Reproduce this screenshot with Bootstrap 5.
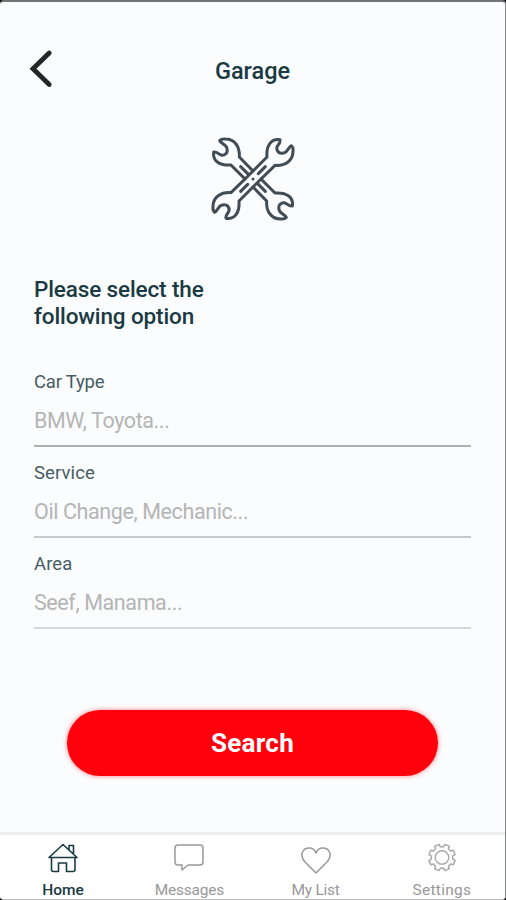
<!DOCTYPE html>
<html lang="en">
<head>
<meta charset="utf-8">
<meta name="viewport" content="width=device-width, initial-scale=1">
<title>Garage</title>
<link rel="stylesheet" href="https://cdn.jsdelivr.net/npm/bootstrap@5.3.0/dist/css/bootstrap.min.css">
<style>
  body { background: #000; font-family: Roboto, "Liberation Sans", sans-serif; color: #1a3a42; }
  .screen { height: 900px; background: #fafcfe; border-top: 2px solid #757575; border-right: 1px solid #858889; border-bottom: 1px solid #bbb; border-radius: 4px; }
  .topbar { height: 138px; padding: 47px 28px 0; }
  .back { width: 26px; height: 40px; }
  .title { font-size: 23.5px; font-weight: 500; line-height: 28px; letter-spacing: 0; padding-top: 8px; }
  .tools { width: 86px; height: 86px; margin-top: -4px; }
  .body-pad { padding: 0 34px; }
  .intro { font-size: 22.5px; font-weight: 500; line-height: 27px; letter-spacing: -.13px; margin-top: 54px; margin-bottom: 40px; }
  .field { height: 91px; }
  .field label { font-size: 18.5px; line-height: 24px; color: #465c62; letter-spacing: -.2px; }
  .field:nth-child(n+2) label { letter-spacing: .1px; }
  .field input { height: 47px; margin-top: 6px; padding: 0 0 5px; font-size: 21.5px; letter-spacing: -.4px; border: 0; border-bottom: 2px solid #adb0b2; border-radius: 0; background: transparent; }
  .field:nth-child(2) input { border-color: #c6c8ca; }
  .field:nth-child(3) input { border-color: #d5d7d9; }
  .field input::placeholder { color: #b5b5b5; }
  .search { width: 371px; height: 66px; margin-top: 67px; border-radius: 33px; background: #ff000d; color: #fff; font-size: 26px; font-weight: 700; letter-spacing: .3px; box-shadow: 0 0 5px rgba(255,0,13,.5); }
  .tabs { height: 67px; background: #fff; border-top: 3px solid #ececed; }
  .tabs a { color: #999; font-size: 15.5px; line-height: 20px; letter-spacing: -.25px; padding-top: 5px; }
  .tabs a:last-child { letter-spacing: .25px; }
  .tabs a.current { color: #1a3a42; font-weight: 500; letter-spacing: 0; }
  .tabs svg { width: 34px; height: 34px; margin-bottom: 6px; }
</style>
</head>
<body>
<main class="screen d-flex flex-column overflow-hidden">
  <header class="topbar row g-0 flex-shrink-0">
    <div class="col-3">
      <a href="#" aria-label="Back"><svg class="back d-block" viewBox="0 0 26 40" fill="none" stroke="#262626" stroke-width="4.8" stroke-linecap="round" stroke-linejoin="miter"><path d="M21.200 4 5 19.800 21.200 35.500"/></svg></a>
    </div>
    <h1 class="title col-6 text-center mb-0">Garage</h1>
  </header>
  <svg class="tools align-self-center flex-shrink-0" viewBox="-129 -129 258 258" fill="none" stroke="#414c55" stroke-width="9" stroke-linecap="round" stroke-linejoin="round">
    <defs>
      <path id="jaw" d="M0-24-41-66C-39-96-54-120-83-120-92-121-97-119-100-115-99-110-84-104-80-97-76-88-76-82-81-76-87-71-94-70-100-74-106-79-112-82-118-81-122-56-102-39-66-42L-24 0"/>
    </defs>
    <use href="#jaw"/><use href="#jaw" transform="rotate(180)"/>
    <path d="M-37-37-10-10M37 37 10 10"/>
    <path d="M-42 66 66-42 42-66-66 42Z" fill="#fafcfe" stroke="none"/>
    <path d="M-24 0 0-24M24 0 0 24"/>
    <use href="#jaw" transform="rotate(90)"/><use href="#jaw" transform="rotate(270)"/>
    <path d="M-37 37-16 16M37-37 16-16M0 0h.1"/>
  </svg>
  <form class="body-pad d-flex flex-column flex-shrink-0">
    <h2 class="intro">Please select the<br>following option</h2>
    <div>
      <div class="field"><label class="d-block" for="car">Car Type</label><input class="form-control shadow-none" id="car" placeholder="BMW, Toyota..."></div>
      <div class="field"><label class="d-block" for="service">Service</label><input class="form-control shadow-none" id="service" placeholder="Oil Change, Mechanic..."></div>
      <div class="field"><label class="d-block" for="area">Area</label><input class="form-control shadow-none" id="area" placeholder="Seef, Manama..."></div>
    </div>
    <button type="button" class="search btn border-0 p-0 align-self-center">Search</button>
  </form>
  <nav class="tabs row g-0 text-center mt-auto flex-shrink-0">
    <a href="#" class="current col d-flex flex-column align-items-center text-decoration-none">
      <svg viewBox="0 0 34 34" fill="none" stroke="#1a3a42" stroke-width="1.6" stroke-linejoin="round"><path d="M3 17.500 17 4.500 31 17.500ZM5.500 17.500V29.500Q5.500 31.500 7.500 31.500H12.500V23H20.500V31.500H27Q29 31.500 29 29.500V17.500M23 9.500V5.500H27.500V13.500"/></svg>Home</a>
    <a href="#" class="col d-flex flex-column align-items-center text-decoration-none">
      <svg viewBox="0 0 34 34" fill="none" stroke="#999" stroke-width="1.5" stroke-linejoin="round"><path d="M6 5H28Q31 5 31 8V22Q31 25 28 25H16L10 30V25H6Q3 25 3 22V8Q3 5 6 5Z"/></svg>Messages</a>
    <a href="#" class="col d-flex flex-column align-items-center text-decoration-none">
      <svg viewBox="0 0 34 34" fill="none" stroke="#999" stroke-width="1.500" stroke-linejoin="round"><path d="M17 33 6 22C-1 14 5 8 10 8 14 8 16 10 17 13 18 10 20 8 24 8 29 8 35 14 28 22Z"/></svg>My List</a>
    <a href="#" class="col d-flex flex-column align-items-center text-decoration-none">
      <svg viewBox="0 0 34 34" fill="none" stroke="#aaa" stroke-width="1.500" stroke-linejoin="round"><circle cx="17" cy="17.500" r="6.800"/><path id="gear"/></svg>Settings</a>
  </nav>
</main>
<script src="https://cdn.jsdelivr.net/npm/bootstrap@5.3.0/dist/js/bootstrap.bundle.min.js"></script>
<script>
  // Eight-toothed gear outline for the settings tab
  const pts = [];
  for (let i = 0; i < 8; i++) {
    [[-14, 10.8], [-10, 13.4], [10, 13.4], [14, 10.8]].forEach(([a, r]) => {
      const t = (i * 45 + 22.5 + a) * Math.PI / 180;
      pts.push((17 + r * Math.cos(t)).toFixed(2) + ' ' + (17.5 + r * Math.sin(t)).toFixed(2));
    });
  }
  document.getElementById('gear').setAttribute('d', 'M' + pts.join('L') + 'Z');
</script>
</body>
</html>
